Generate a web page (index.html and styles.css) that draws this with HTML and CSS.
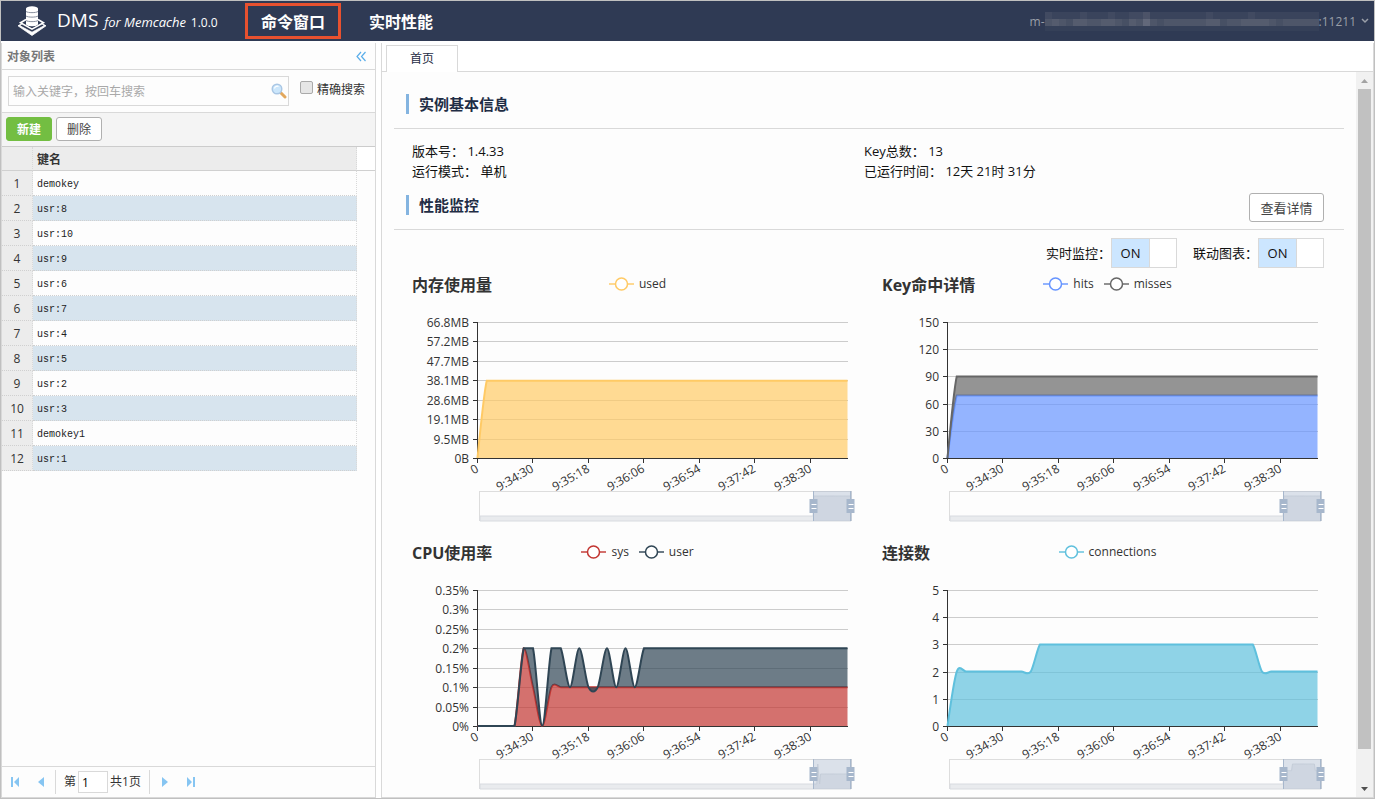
FILE: index.html
```
<!DOCTYPE html>
<html lang="zh-CN">
<head>
  <meta charset="UTF-8" />
  <title>DMS for Memcache</title>
  <link rel="stylesheet" href="styles.css">
</head>
<body>
  <header class="topbar">
    <svg class="logo" width="30" height="30" viewBox="0 0 30 30" aria-hidden="true">
      <path d="M5 17.500L1 19.800L15 29.500L29 19.800L25 17.500L27 19.800L15 26.200L3 19.800z" fill="#fff" stroke="#fff" stroke-width="0.800" />
      <path d="M9 13.500L3.500 16.800L15 23.200L26.500 16.800L21 13.500" fill="none" stroke="#fff" stroke-width="1.600" />
      <path d="M9 2.500v15.500c0 3 12 3 12 0v-15.500z" fill="#fff" />
      <ellipse cx="15" cy="2.500" rx="6" ry="2.200" fill="#fff" />
      <path d="M9 5.500c2 1.500 10 1.500 12 0M9 10c2 1.500 10 1.500 12 0M9 14.500c2 1.500 10 1.500 12 0" fill="none" stroke="#8a91a0" stroke-width="1" />
    </svg>
    <h1 class="brand">DMS <em>for Memcache</em> <small>1.0.0</small></h1>
    <nav class="topnav">
      <a href="#command" class="active">命令窗口</a>
      <a href="#realtime">实时性能</a>
    </nav>
    <button type="button" class="instance">
      <span>m-</span>
      <svg class="masked" width="274" height="19" aria-hidden="true">
        <rect width="274" height="7" fill="#3a445c" />
        <rect y="7" width="274" height="7" fill="#4e5669" />
        <rect y="14" width="274" height="5" fill="#354058" />
        <g fill="#414a61">
          <rect width="7" height="7" /><rect x="35" width="7" height="7" /><rect x="63" width="7" height="7" /><rect x="84" width="14" height="7" />
          <rect x="161" width="7" height="7" /><rect x="203" width="7" height="7" />
        </g>
        <g fill="#4c5368">
          <rect x="98" width="7" height="7" />
        </g>
        <g fill="#555c6e">
          <rect x="7" y="7" width="7" height="7" /><rect x="28" y="7" width="14" height="7" /><rect x="56" y="7" width="14" height="7" />
          <rect x="84" y="7" width="7" height="7" /><rect x="161" y="7" width="14" height="7" /><rect x="196" y="7" width="28" height="7" />
        </g>
        <g fill="#62687a">
          <rect x="98" y="7" width="7" height="7" />
        </g>
        <g fill="#475064">
          <rect x="21" y="7" width="7" height="7" /><rect x="77" y="7" width="7" height="7" /><rect x="112" y="7" width="7" height="7" />
          <rect x="175" y="7" width="7" height="7" /><rect x="231" y="7" width="7" height="7" />
        </g>
      </svg>
      <span>:11211</span>
      <svg class="caret" width="8" height="6" viewBox="0 0 8 6" aria-hidden="true">
        <path d="M1 1l3 3l3-3" fill="none" stroke="#9a9fa8" stroke-width="1.500" />
      </svg>
    </button>
  </header>

  <div class="workspace">
    <aside class="sidebar">
      <div class="sidebar-title">
        <h2>对象列表</h2>
        <button type="button" class="collapse" aria-label="收起">
          <svg width="10" height="11" viewBox="0 0 10 11">
            <path d="M5 1L1 5.500L5 10M9.500 1L5.500 5.500L9.500 10" fill="none" stroke="#5aaeea" stroke-width="1.200" />
          </svg>
        </button>
      </div>

      <form class="search">
        <div class="search-box">
          <input type="text" id="keyword" placeholder="输入关键字，按回车搜索" aria-label="关键字" />
          <svg width="16" height="16" viewBox="0 0 16 16" aria-hidden="true">
            <path d="M9.500 9.500L14 14" stroke="#e2a75c" stroke-width="3" stroke-linecap="round" />
            <circle cx="6" cy="6" r="4.800" fill="#cbe6fb" stroke="#a9c6e4" stroke-width="1.400" />
            <path d="M3.500 5.500a2.800 2.800 0 0 1 4-2" fill="none" stroke="#fff" stroke-width="1.300" />
          </svg>
        </div>
        <input type="checkbox" id="exact" />
        <label for="exact">精确搜索</label>
      </form>

      <div class="toolbar">
        <button type="button" class="btn btn-new">新建</button>
        <button type="button" class="btn">删除</button>
      </div>

      <div class="key-list">
        <table class="keys">
          <thead>
            <tr><th class="num"></th><th class="name">键名</th><th class="gutter"></th></tr>
          </thead>
          <tbody>
            <tr><td class="num">1</td><td class="name">demokey</td></tr>
            <tr><td class="num">2</td><td class="name">usr:8</td></tr>
            <tr><td class="num">3</td><td class="name">usr:10</td></tr>
            <tr><td class="num">4</td><td class="name">usr:9</td></tr>
            <tr><td class="num">5</td><td class="name">usr:6</td></tr>
            <tr><td class="num">6</td><td class="name">usr:7</td></tr>
            <tr><td class="num">7</td><td class="name">usr:4</td></tr>
            <tr><td class="num">8</td><td class="name">usr:5</td></tr>
            <tr><td class="num">9</td><td class="name">usr:2</td></tr>
            <tr><td class="num">10</td><td class="name">usr:3</td></tr>
            <tr><td class="num">11</td><td class="name">demokey1</td></tr>
            <tr><td class="num">12</td><td class="name">usr:1</td></tr>
          </tbody>
        </table>
      </div>

      <div class="pager">
        <button type="button" aria-label="首页">
          <svg width="10" height="10" viewBox="0 0 10 10"><path d="M1 0h2v10h-2zM9 0v10l-5-5z" fill="#86c5f2" /></svg>
        </button>
        <button type="button" aria-label="上一页">
          <svg width="10" height="10" viewBox="0 0 10 10"><path d="M8 0v10l-6-5z" fill="#86c5f2" /></svg>
        </button>
        <div class="page-info">
          <label for="page">第</label>
          <input type="text" id="page" value="1" />
          <span>共1页</span>
        </div>
        <button type="button" aria-label="下一页">
          <svg width="10" height="10" viewBox="0 0 10 10"><path d="M2 0v10l6-5z" fill="#86c5f2" /></svg>
        </button>
        <button type="button" aria-label="末页">
          <svg width="10" height="10" viewBox="0 0 10 10"><path d="M7 0h2v10h-2zM1 0v10l5-5z" fill="#86c5f2" /></svg>
        </button>
      </div>
    </aside>

    <main class="content">
      <div class="tabs">
        <a href="#home" class="tab">首页</a>
      </div>
      <div class="pane">
        <div class="pane-body">
          <div class="section-head">
            <h2>实例基本信息</h2>
          </div>
          <div class="info">
            <div>版本号： 1.4.33</div>
            <div>Key总数： 13</div>
            <div>运行模式： 单机</div>
            <div>已运行时间： 12天 21时 31分</div>
          </div>

          <div class="section-head">
            <h2>性能监控</h2>
            <button type="button" class="btn btn-detail">查看详情</button>
          </div>
          <div class="switches">
            <label class="switch">实时监控：
              <input type="checkbox" checked />
              <span class="track"><span class="on">ON</span></span>
            </label>
            <label class="switch">联动图表：
              <input type="checkbox" checked />
              <span class="track"><span class="on">ON</span></span>
            </label>
          </div>

          <div class="charts">
            <section class="chart" id="memory"></section>
            <section class="chart" id="keyHits"></section>
            <section class="chart" id="cpu"></section>
            <section class="chart" id="connections"></section>
          </div>
        </div>
        <div class="scrollbar" aria-hidden="true">
          <svg width="17" height="17" viewBox="0 0 17 17"><path d="M5 11h7l-3.500-4z" fill="#a3a3a3" /></svg>
          <div class="rail"><div class="thumb"></div></div>
          <svg width="17" height="17" viewBox="0 0 17 17"><path d="M5 7h7l-3.500 4z" fill="#505050" /></svg>
        </div>
      </div>
    </main>
  </div>

  <script src="charts.js"></script>
</body>
</html>
```

FILE: styles.css
```
* {
  box-sizing: border-box;
}
body {
  margin: 0;
  height: 100vh;
  display: flex;
  flex-direction: column;
  overflow: hidden;
  border: 1px solid #c0c0c0;
  background: #fff;
  color: #333;
  font-family: "Open Sans", "Noto Sans CJK SC", sans-serif;
  font-size: 12px;
  line-height: 20px;
}
h1, h2, h3 {
  margin: 0;
}
button, input {
  font-family: inherit;
  font-size: 12px;
}
button {
  padding: 0;
  border: none;
  background: none;
  cursor: pointer;
}
svg {
  display: block;
}

/* top bar */
.topbar {
  display: flex;
  align-items: center;
  flex: none;
  height: 40px;
  padding: 0 5px 0 16px;
  background: #2f3a54;
  color: #fff;
}
.brand {
  margin-left: 10px;
  width: 188px;
  font-size: 19px;
  font-weight: 400;
  white-space: nowrap;
}
.brand em {
  margin-left: 1px;
  font-size: 13px;
}
.brand small {
  font-size: 12px;
}
.topnav {
  display: flex;
  gap: 12px;
}
.topnav a {
  height: 36px;
  padding: 0 13px;
  border: 3px solid transparent;
  color: #fff;
  font-size: 16px;
  font-weight: 700;
  line-height: 32px;
  text-decoration: none;
}
.topnav a.active {
  border-color: #e8512f;
}
.instance {
  display: flex;
  align-items: center;
  margin-left: auto;
  color: #9a9fa8;
}
.caret {
  margin-left: 5px;
}

.workspace {
  display: flex;
  flex: 1;
  gap: 5px;
  min-height: 0;
  padding-top: 2px;
}

/* key list */
.sidebar {
  display: flex;
  flex-direction: column;
  flex: none;
  width: 375px;
  border: 1px solid #d9d9d9;
  border-top: none;
  background: #fdfdfd;
}
.sidebar-title {
  display: flex;
  align-items: center;
  justify-content: space-between;
  height: 27px;
  padding: 1px 9px 0 5px;
  border-bottom: 1px solid #d9d9d9;
}
.sidebar-title h2 {
  color: #777;
  font-size: 12px;
}
.search {
  display: flex;
  height: 43px;
  padding: 6px 5px 6px 6px;
  border-bottom: 1px solid #d9d9d9;
}
.search-box {
  display: flex;
  align-items: center;
  flex: 1;
  height: 30px;
  padding-right: 1px;
  border: 1px solid #d9d9d9;
}
.search-box input {
  flex: 1;
  min-width: 0;
  padding: 0 4px;
  border: none;
  outline: none;
  background: none;
}
.search-box input::placeholder {
  color: #a9a9a9;
}
.search label {
  width: 53px;
  padding-top: 4px;
}
.search input[type="checkbox"] {
  appearance: none;
  width: 13px;
  height: 13px;
  margin: 5px 4px 0 11px;
  border: 1px solid #aaa;
  border-radius: 2px;
  background: #e6e6e6;
}
.toolbar {
  display: flex;
  gap: 4px;
  height: 34px;
  padding: 4px;
  border-bottom: 1px solid #ccc;
  background: #f4f4f4;
}
.btn {
  width: 46px;
  height: 24px;
  border: 1px solid #b0b0b0;
  border-radius: 3px;
  background: #fff;
  color: #444;
}
.btn-new {
  border-color: #73be42;
  background: #73be42;
  color: #fff;
  font-weight: 700;
}
.key-list {
  flex: 1;
  overflow: hidden;
}
.keys {
  width: 100%;
  border-collapse: separate;
  border-spacing: 0;
  table-layout: fixed;
}
.keys th, .keys td {
  height: 25px;
  padding: 2px 4px 0;
  border-right: 1px dotted #d9d9d9;
  border-bottom: 1px dotted #d0d0d0;
  text-align: left;
}
.keys th {
  height: 24px;
  border-bottom: 1px solid #d0d0d0;
  background: #ececec;
}
.keys .num {
  width: 31px;
  padding: 2px 0 0;
  background: #ececec;
  text-align: center;
}
.keys td.name {
  padding-top: 3px;
  color: #222;
  font-family: "Liberation Mono", monospace;
  font-size: 10px;
}
.keys .gutter {
  width: 18px;
  border-right: none;
  background: #fff;
}
.keys tbody tr:nth-child(even) .name {
  background: #d7e4ee;
}
.pager {
  display: flex;
  align-items: center;
  height: 31px;
  padding-left: 8px;
  gap: 16px;
  border-top: 1px solid #d9d9d9;
}
.page-info {
  display: flex;
  align-items: center;
  gap: 2px;
  height: 24px;
  margin: 0 -6px 0 -7px;
  padding: 0 8px;
  border-left: 1px solid #d9d9d9;
  border-right: 1px solid #d9d9d9;
}
.page-info input {
  width: 30px;
  height: 22px;
  padding: 0 3px;
  border: 1px solid #d9d9d9;
}

/* content */
.content {
  display: flex;
  flex-direction: column;
  flex: 1;
  min-width: 0;
  border: 1px solid #d9d9d9;
  border-top: none;
}
.tabs {
  display: flex;
  flex: none;
  height: 29px;
  padding: 2px 4px 0;
  border-bottom: 1px solid #d9d9d9;
}
.tab {
  height: 27px;
  padding: 0 23px;
  border: 1px solid #d9d9d9;
  border-bottom: none;
  background: #fff;
  color: #1f2d45;
  line-height: 25px;
  text-decoration: none;
}
.pane {
  display: flex;
  flex: 1;
  min-height: 0;
  background: #fdfdfd;
}
.pane-body {
  flex: 1;
  min-width: 0;
  padding-top: 8px;
  overflow: hidden;
}
.section-head {
  display: flex;
  align-items: center;
  justify-content: space-between;
  height: 49px;
  margin: 0 12px;
  padding: 0 20px 0 12px;
  border-bottom: 1px solid #d9d9d9;
}
.section-head h2 {
  padding-left: 10px;
  border-left: 3px solid #84b4e0;
  color: #1f2d45;
  font-size: 15px;
}
.btn-detail {
  width: 75px;
  height: 29px;
  margin-top: 4px;
  font-size: 13px;
}
.info {
  display: grid;
  grid-template-columns: 1fr 1fr;
  margin-top: 12px;
  padding: 0 40px 0 30px;
  color: #111;
  font-size: 13px;
}
.switches {
  display: flex;
  justify-content: flex-end;
  gap: 16px;
  margin: 8px 32px 0;
}
.switch {
  display: flex;
  align-items: center;
  position: relative;
  height: 30px;
  color: #111;
  font-size: 13px;
}
.switch input {
  position: absolute;
  right: 0;
  margin: 0;
  opacity: 0;
}
.track {
  width: 66px;
  height: 30px;
  border: 1px solid #d9d9d9;
  background: #fff;
}
.on {
  display: block;
  width: 38px;
  height: 28px;
  border-right: 1px solid #d9d9d9;
  background: #cce6ff;
  line-height: 28px;
  text-align: center;
}

/* charts */
.charts {
  display: grid;
  grid-template-columns: 1fr 1fr;
  column-gap: 9px;
  padding: 0 18px 0 25px;
}
.chart {
  height: 268px;
  min-width: 0;
}
.chart-head {
  display: grid;
  grid-template-columns: 1fr auto 1fr;
  height: 32px;
}
.chart-head h3 {
  padding: 5px 0 0 5px;
  font-size: 16px;
  line-height: 24px;
}
.legend {
  display: flex;
  align-items: center;
  gap: 10px;
}
.legend span {
  display: flex;
  align-items: center;
  gap: 5px;
}
.plot text {
  fill: #333;
  font-size: 12px;
}
.grid-line {
  stroke: #ccc;
}
.axis {
  stroke: #333;
}
.series-line {
  fill: none;
  stroke-width: 2;
}
.series-area {
  opacity: 0.7;
}

/* scroll bar */
.scrollbar {
  display: flex;
  flex-direction: column;
  width: 17px;
  background: #f1f1f1;
}
.rail {
  flex: 1;
  padding: 0 2px;
}
.thumb {
  height: calc(100% - 31px);
  background: #c1c1c1;
}
```

FILE: charts.js
```
const times = ['0', '9:34:30', '9:35:18', '9:36:06', '9:36:54', '9:37:42', '9:38:30'];
const COUNT = 41;

// start values, then the last one repeated up to the end of the window
function fill(values) {
  const out = values.slice();
  while (out.length < COUNT) out.push(values[values.length - 1]);
  return out;
}

const connections = fill([0, 2, 2, 2, 2, 2, 2, 2, 2, 2, 3]);
for (let i = 34; i < COUNT; i++) connections[i] = 2;

const charts = [
  {
    id: 'memory', title: '内存使用量', max: 66.8,
    labels: ['0B', '9.5MB', '19.1MB', '28.6MB', '38.1MB', '47.7MB', '57.2MB', '66.8MB'],
    series: [{ name: 'used', color: '#ffca65', data: fill([0, 38]) }]
  },
  {
    id: 'keyHits', title: 'Key命中详情', max: 150,
    labels: ['0', '30', '60', '90', '120', '150'],
    series: [
      { name: 'hits', color: '#6694ff', data: fill([0, 69]) },
      { name: 'misses', color: '#666666', data: fill([0, 90]) }
    ]
  },
  {
    id: 'cpu', title: 'CPU使用率', max: 0.35,
    labels: ['0%', '0.05%', '0.1%', '0.15%', '0.2%', '0.25%', '0.3%', '0.35%'],
    series: [
      { name: 'sys', color: '#c23531', data: fill([0, 0, 0, 0, 0, 0.2, 0.1, 0, 0.1]) },
      { name: 'user', color: '#2f4554', data: fill([0, 0, 0, 0, 0, 0.2, 0.2, 0, 0.2, 0.2, 0.1, 0.2, 0.1, 0.1, 0.2, 0.1, 0.2, 0.1, 0.2]) }
    ]
  },
  {
    id: 'connections', title: '连接数', max: 5,
    labels: ['0', '1', '2', '3', '4', '5'],
    series: [{ name: 'connections', color: '#5fc0dd', data: connections }]
  }
];

// bezier segments through the points, kept inside their value range
function smooth(points) {
  const ys = points.map(p => p[1]);
  const lo = Math.min(...ys);
  const hi = Math.max(...ys);
  const clamp = (x, y) => [x, Math.max(lo, Math.min(hi, y))];
  const segments = [];
  let cp0 = points[0];
  for (let i = 1; i < points.length; i++) {
    const prev = points[i - 1];
    const p = points[i];
    const next = points[i + 1] || p;
    const dx = (next[0] - prev[0]) * 0.15;
    const dy = (next[1] - prev[1]) * 0.15;
    segments.push([prev, cp0, clamp(p[0] - dx, p[1] - dy), p]);
    cp0 = clamp(p[0] + dx, p[1] + dy);
  }
  return segments;
}

const forward = segs => segs.map(s => `C${s[1]} ${s[2]} ${s[3]}`).join('');
const backward = segs => segs.slice().reverse().map(s => `C${s[2]} ${s[1]} ${s[0]}`).join('');

function handle(x) {
  return `<path d="M${x} 191v30" stroke="#a7b7cc" />
    <rect x="${x - 4}" y="199" width="8" height="14" fill="#a7b7cc" />
    <path d="M${x - 2} 204.500h5M${x - 2} 208.500h5" stroke="#fff" />`;
}

function draw(chart) {
  const el = document.getElementById(chart.id);
  const width = el.clientWidth;
  const left = 71;
  const right = width - 20;
  const top = 22;
  const bottom = 158;
  const px = i => left + (right - left) * i / (COUNT - 1) - 0.5;
  const py = v => bottom - (bottom - top) * v / chart.max;

  const legend = chart.series.map(s => `<span>
    <svg width="25" height="14"><path d="M0 7h25" stroke="${s.color}" stroke-width="2" opacity="0.7" />
    <circle cx="12.500" cy="7" r="6" fill="#fff" stroke="${s.color}" stroke-width="1.500" /></svg>${s.name}</span>`).join('');

  let svg = '';
  chart.labels.forEach((label, i) => {
    const y = Math.round(bottom - (bottom - top) * i / (chart.labels.length - 1)) + 0.5;
    if (i > 0) svg += `<path class="grid-line" d="M${left} ${y}H${right}" />`;
    svg += `<path class="axis" d="M${left - 5} ${y}H${left}" />`;
    svg += `<text x="${left - 9}" y="${y + 4.5}" text-anchor="end">${label}</text>`;
  });
  svg += `<path class="axis" d="M${left - 0.5} ${top}V${bottom + 5}M${left} ${bottom + 0.5}H${right}" />`;
  times.forEach((time, i) => {
    const x = Math.round(px(i * 6)) - 0.5;
    svg += `<path class="axis" d="M${x} ${bottom}v5" />`;
    svg += `<text transform="translate(${x + 2} ${bottom + 13}) rotate(-30)" text-anchor="end">${time}</text>`;
  });

  // each area stands on the series below it
  let below = null;
  chart.series.forEach(s => {
    const segs = smooth(s.data.map((v, i) => [px(i), py(v)]));
    const start = segs[0][0];
    const end = segs[segs.length - 1][3];
    const base = below
      ? `L${below[below.length - 1][3]}${backward(below)}`
      : `L${end[0]} ${bottom}L${left} ${bottom}`;
    svg += `<path class="series-area" fill="${s.color}" d="M${start}${forward(segs)}${base}Z" />`;
    svg += `<path class="series-line" stroke="${s.color}" d="M${start}${forward(segs)}" />`;
    below = segs;
  });

  // zoom slider
  const zl = left + 1;
  const zr = right + 3;
  const from = zr - 38;
  const data = chart.series[0].data;
  const peak = Math.max(...data);
  const shadow = data.map((v, i) => `L${from + 38 * i / (COUNT - 1)} ${216 - 20 * v / peak}`).join('');
  svg += `<rect x="${zl + 0.5}" y="191.500" width="${zr - zl}" height="29" fill="none" stroke="#ddd" />
    <path d="M${zl + 1} 221V216H${from}${shadow}V221Z" fill="#e9ebee" stroke="#d8dbe0" />
    <rect x="${from}" y="191" width="39" height="30" fill="#a7b7cc" opacity="0.4" />
    ${handle(from + 0.5)}${handle(zr - 0.5)}`;

  el.innerHTML = `<div class="chart-head"><h3>${chart.title}</h3><div class="legend">${legend}</div></div>
    <svg class="plot" width="${width}" height="236">${svg}</svg>`;
}

function drawAll() {
  charts.forEach(draw);
}
drawAll();
window.addEventListener('resize', drawAll);
```
